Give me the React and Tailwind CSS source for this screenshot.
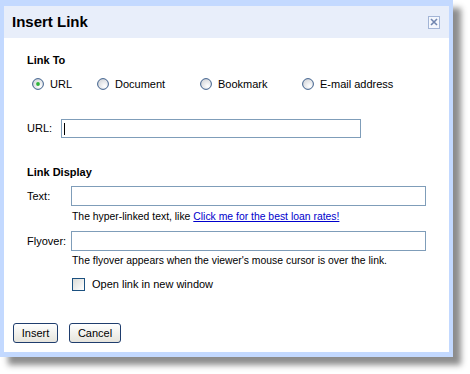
import React from "react";

function Radio({ checked }) {
  return (
    <svg width="12" height="12" viewBox="0 0 12 12" className="shrink-0">
      <defs>
        <radialGradient id={checked ? "rg1" : "rg0"} cx="0.65" cy="0.7" r="0.7">
          <stop offset="0" stopColor="#ffffff" />
          <stop offset="1" stopColor="#d6d8dc" />
        </radialGradient>
      </defs>
      <circle cx="6" cy="6" r="5.4" fill={`url(#${checked ? "rg1" : "rg0"})`} stroke="#3d5f8c" strokeWidth="1" />
      {checked && <circle cx="6" cy="6" r="1.9" fill="#2fb43a" />}
    </svg>
  );
}

function Button({ children, width }) {
  return (
    <button
      className={`${width} h-[20px] rounded-[3px] border border-[#1f3d6d] bg-gradient-to-b from-white to-[#e6e4dc] text-[11px] leading-[13px] text-black`}
    >
      {children}
    </button>
  );
}

export default function App() {
  return (
    <div className="w-[470px] h-[374px] bg-white" style={{ fontFamily: '"Liberation Sans", Arial, sans-serif' }}>
      <div className="w-[453px] h-[357px] border-x-4 border-t-[6px] border-b-[5px] border-[#c3d9ff] bg-white flex flex-col shadow-[8px_8px_6px_rgba(0,0,0,0.45)]">
        {/* title bar */}
        <div className="h-[32px] bg-[#e8eefa] flex items-center justify-between pl-[8px] pr-[9px]">
          <span className="text-[15px] font-bold text-black">Insert Link</span>
          <div className="w-[12px] h-[13px] border border-[#a3b5d6] bg-[#f4f7fd] flex items-center justify-center">
            <svg width="8" height="8" viewBox="0 0 8 8">
              <path d="M1 1 L7 7 M7 1 L1 7" stroke="#7186b0" strokeWidth="1.6" />
            </svg>
          </div>
        </div>

        {/* body */}
        <div className="pl-[23px] flex flex-col">
          <div className="mt-[16px] text-[11px] leading-[13px] font-bold text-black">Link To</div>

          <div className="mt-[10px] ml-[5px] flex items-center h-[14px] text-[11px] text-black">
            <div className="w-[65px] flex items-center gap-[6px]">
              <Radio checked />
              <span>URL</span>
            </div>
            <div className="w-[103px] flex items-center gap-[6px]">
              <Radio />
              <span>Document</span>
            </div>
            <div className="w-[102px] flex items-center gap-[6px]">
              <Radio />
              <span>Bookmark</span>
            </div>
            <div className="flex items-center gap-[6px]">
              <Radio />
              <span>E-mail address</span>
            </div>
          </div>

          <div className="mt-[28px] flex items-center">
            <span className="w-[34px] text-[11px] leading-[13px] text-black">URL:</span>
            <div className="w-[300px] h-[19px] border border-[#7f9db9] bg-white flex items-center pl-[2px]">
              <div className="w-px h-[12px] bg-black" />
            </div>
          </div>

          <div className="mt-[28px] text-[11px] leading-[13px] font-bold text-black">Link Display</div>

          <div className="mt-[7px] flex items-center">
            <span className="w-[44px] text-[11px] leading-[13px] text-black">Text:</span>
            <div className="w-[355px] h-[20px] border border-[#7f9db9] bg-white" />
          </div>
          <div className="mt-[5px] ml-[45px] text-[10.4px] leading-[12px] text-black">
            The hyper-linked text, like{" "}
            <span className="text-[#0000cc] underline">Click me for the best loan rates!</span>
          </div>

          <div className="mt-[8px] flex items-center">
            <span className="w-[44px] text-[11px] leading-[13px] text-black">Flyover:</span>
            <div className="w-[355px] h-[20px] border border-[#7f9db9] bg-white" />
          </div>
          <div className="mt-[4px] ml-[45px] text-[10.4px] leading-[12px] text-black">
            The flyover appears when the viewer's mouse cursor is over the link.
          </div>

          <div className="mt-[11px] ml-[45px] flex items-center gap-[7px]">
            <div className="w-[13px] h-[13px] border border-[#1c5180] bg-gradient-to-br from-[#dcdcd7] to-white" />
            <span className="text-[11px] leading-[13px] text-black">Open link in new window</span>
          </div>
        </div>

        <div className="mt-[32px] pl-[9px] flex gap-[11px]">
          <Button width="w-[45px]">Insert</Button>
          <Button width="w-[52px]">Cancel</Button>
        </div>
      </div>
    </div>
  );
}
